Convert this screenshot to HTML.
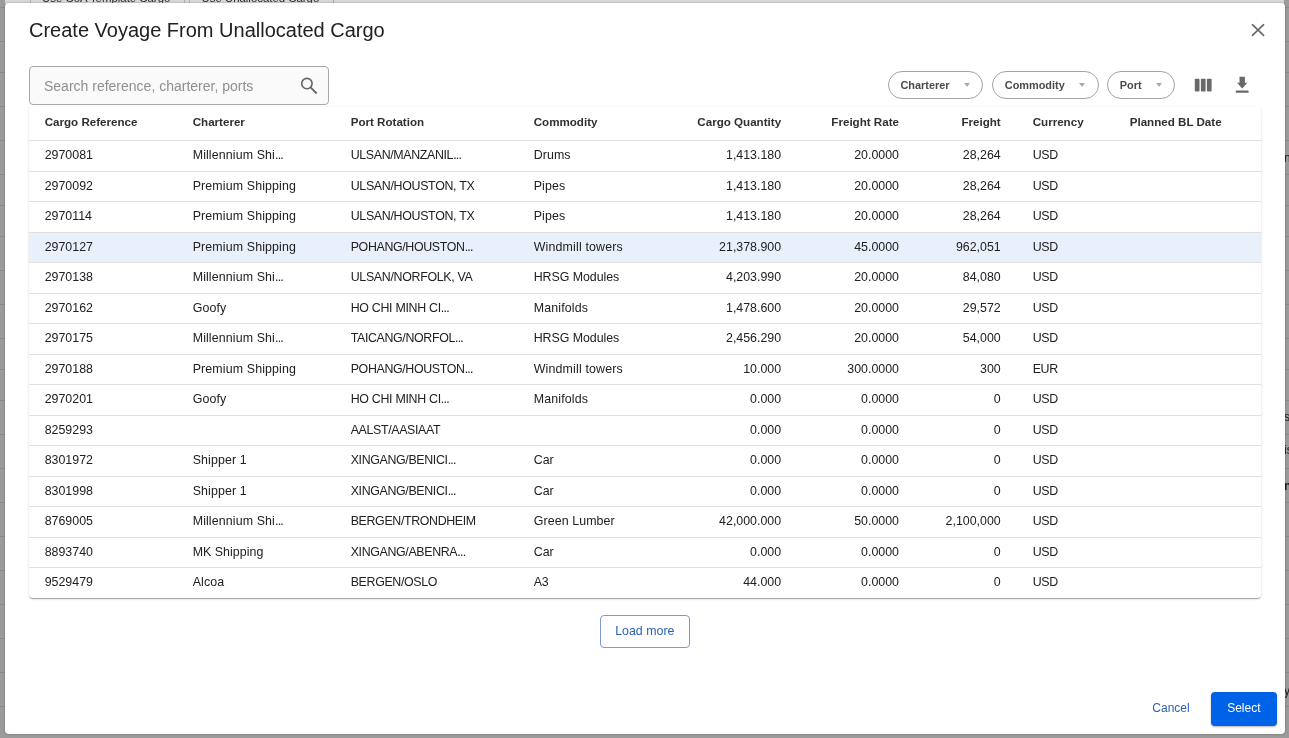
<!DOCTYPE html>
<html><head><meta charset="utf-8">
<style>
*{box-sizing:border-box;margin:0;padding:0}
html,body{width:1289px;height:738px;overflow:hidden;background:#9b9b9b;font-family:"Liberation Sans",sans-serif;color:#212121;-webkit-font-smoothing:antialiased}
.abs{position:absolute}
.t{position:absolute;white-space:nowrap;line-height:1}
.bgline{position:absolute;left:0;width:1289px;height:1px;background:#8b8b8b}
#topbar{will-change:transform;position:absolute;left:5px;top:0;width:1279px;height:4px;background:#d9d9d9;overflow:hidden}
#topbar .sep{position:absolute;top:0;width:1px;height:4px;background:#b0b0b0}
#modal{will-change:transform;position:absolute;left:5px;top:3px;width:1280px;height:731px;background:#fff;border-radius:4px;box-shadow:0 0 2.5px rgba(0,0,0,.3)}
#title{left:24px;top:17px;font-size:20px;color:#212121}
#search{left:24px;top:63px;width:300px;height:39px;border:1px solid #a8a8a8;border-radius:4px;background:#fafafa}
.chip{position:absolute;top:68px;height:27.5px;border:1px solid #a3a3a3;border-radius:14px}
.chipt{font-size:10.9px;font-weight:bold;color:#4a4a4a}
.arr{position:absolute;width:0;height:0;border-left:3.2px solid transparent;border-right:3.2px solid transparent;border-top:4px solid #ababab}
#table{left:24px;top:103.7px;width:1232px;height:491.8px;background:#fff;border-radius:4px;box-shadow:0 2px 1px -1px rgba(0,0,0,.2),0 1px 1px 0 rgba(0,0,0,.14),0 1px 3px 0 rgba(0,0,0,.12)}
.row{position:absolute;left:0;width:1232px;height:30.5px;border-top:1px solid #e0e0e0;font-size:12.4px;color:#212121}
.row.sel{background:#e8f0fc}
.hdr{position:absolute;left:0;top:0;width:1232px;height:33.5px;font-size:11.6px;font-weight:bold;color:#303030}
.c{position:absolute;white-space:nowrap;top:7.1px}
.hdr .c{top:8.6px}
.r{text-align:right}
.up{letter-spacing:-0.38px}
.el{letter-spacing:-0.75px;margin-left:0px}
#load{left:595.3px;top:612.3px;width:89.3px;height:32.3px;border:1px solid #7d9bd1;border-radius:4px}
#select{left:1206.1px;top:689.3px;width:65.6px;height:33.4px;background:#0062e6;border-radius:4px;box-shadow:0 1px 2px rgba(0,0,0,.3)}
.rs{will-change:transform;position:absolute;font-size:12px;color:#1a1a1a;white-space:nowrap;line-height:1}
</style></head><body>
<div class="bgline" style="top:7px"></div>
<div class="bgline" style="top:41px"></div>
<div class="bgline" style="top:72px"></div>
<div class="bgline" style="top:106px"></div>
<div class="bgline" style="top:140px"></div>
<div class="bgline" style="top:174px"></div>
<div class="bgline" style="top:205px"></div>
<div class="bgline" style="top:236px"></div>
<div class="bgline" style="top:270px"></div>
<div class="bgline" style="top:304px"></div>
<div class="bgline" style="top:338px"></div>
<div class="bgline" style="top:369px"></div>
<div class="bgline" style="top:400px"></div>
<div class="bgline" style="top:434px"></div>
<div class="bgline" style="top:468px"></div>
<div class="bgline" style="top:502px"></div>
<div class="bgline" style="top:536px"></div>
<div class="bgline" style="top:570px"></div>
<div class="bgline" style="top:604px"></div>
<div class="bgline" style="top:638px"></div>
<div class="bgline" style="top:672px"></div>
<div class="bgline" style="top:706px"></div>
<div id="topbar">
  <div class="sep" style="left:24.5px"></div>
  <div class="sep" style="left:178.5px"></div>
  <div class="sep" style="left:183.5px"></div>
  <div class="sep" style="left:327.5px"></div>
  <div class="t" style="left:37px;top:-6.8px;font-size:11.4px;color:#2a2a2a">Use CoA Template Cargo</div>
  <div class="t" style="left:196.5px;top:-6.8px;font-size:11.4px;color:#2a2a2a">Use Unallocated Cargo</div>
</div>
<div class="rs" style="left:1284.2px;top:151.5px">n</div>
<div class="rs" style="left:1284.3px;top:411px">s</div>
<div class="rs" style="left:1284.3px;top:443.5px">is</div>
<div class="rs" style="left:1284.2px;top:479.5px;font-weight:bold">n</div>
<div class="rs" style="left:1284px;top:684.5px">y</div>

<div id="modal">
  <div id="title" class="t">Create Voyage From Unallocated Cargo</div>
  <svg class="abs" style="left:1235px;top:12px" width="36" height="36" viewBox="1240 15 36 36"><path d="M1252.4 24.7L1263.6 35.4M1263.6 24.7L1252.4 35.4" stroke="#666" stroke-width="1.6" stroke-linecap="round" fill="none"/></svg>

  <div id="search" class="abs"></div>
  <div class="t" style="left:39px;top:76px;font-size:14px;color:#8f8f8f">Search reference, charterer, ports</div>
  <svg class="abs" style="left:285px;top:67px" width="40" height="30" viewBox="290 70 40 30"><circle cx="306.9" cy="83.6" r="5.2" stroke="#666" stroke-width="1.6" fill="none"/><path d="M310.8 87.6L316 92.8" stroke="#666" stroke-width="1.9" stroke-linecap="square" fill="none"/></svg>

  <div class="chip" style="left:883.2px;width:95.3px"></div>
  <div class="t chipt" style="left:895.5px;top:76.5px">Charterer</div>
  <div class="arr" style="left:958.8px;top:80.2px"></div>
  <div class="chip" style="left:987px;width:106.8px"></div>
  <div class="t chipt" style="left:999.8px;top:76.5px">Commodity</div>
  <div class="arr" style="left:1073.9px;top:80.2px"></div>
  <div class="chip" style="left:1102.1px;width:68.4px"></div>
  <div class="t chipt" style="left:1114.8px;top:76.5px">Port</div>
  <div class="arr" style="left:1150.9px;top:80.2px"></div>

  <svg class="abs" style="left:1180px;top:67px" width="75" height="30" viewBox="1185 70 75 30">
    <rect x="1194.8" y="78.7" width="4.7" height="12.8" rx="0.9" fill="#696969"/>
    <rect x="1200.9" y="78.7" width="4.7" height="12.8" rx="0.9" fill="#696969"/>
    <rect x="1206.9" y="78.7" width="4.7" height="12.8" rx="0.9" fill="#696969"/>
    <path d="M1239.5 76.8H1244.9V82.8H1247.4L1242.2 88.6L1237 82.8H1239.5Z" fill="#696969"/>
    <rect x="1235.8" y="90.6" width="12.8" height="2.1" rx="0.5" fill="#696969"/>
  </svg>

  <div id="table" class="abs">
    <div class="hdr">
      <span class="c" style="left:15.7px">Cargo Reference</span>
      <span class="c" style="left:163.7px">Charterer</span>
      <span class="c" style="left:321.7px">Port Rotation</span>
      <span class="c" style="left:504.7px">Commodity</span>
      <span class="c r" style="right:479.9px">Cargo Quantity</span>
      <span class="c r" style="right:362px">Freight Rate</span>
      <span class="c r" style="right:260.3px">Freight</span>
      <span class="c" style="left:1003.7px">Currency</span>
      <span class="c" style="left:1100.7px">Planned BL Date</span>
    </div>
    <div class="row" style="top:33.5px"><span class="c" style="left:15.7px">2970081</span><span class="c" style="left:163.7px;letter-spacing:0.119px">Millennium Shi<span class="el">...</span></span><span class="c" style="left:321.7px;letter-spacing:-0.353px">ULSAN/MANZANIL<span class="el">...</span></span><span class="c" style="left:504.7px;letter-spacing:0.1px">Drums</span><span class="c r" style="right:479.9px">1,413.180</span><span class="c r" style="right:362px">20.0000</span><span class="c r" style="right:260.3px">28,264</span><span class="c" style="left:1003.7px;letter-spacing:-0.37px">USD</span></div>
    <div class="row" style="top:64.0px"><span class="c" style="left:15.7px">2970092</span><span class="c" style="left:163.7px;letter-spacing:0.131px">Premium Shipping</span><span class="c" style="left:321.7px;letter-spacing:-0.313px">ULSAN/HOUSTON, TX</span><span class="c" style="left:504.7px;letter-spacing:0.1px">Pipes</span><span class="c r" style="right:479.9px">1,413.180</span><span class="c r" style="right:362px">20.0000</span><span class="c r" style="right:260.3px">28,264</span><span class="c" style="left:1003.7px;letter-spacing:-0.37px">USD</span></div>
    <div class="row" style="top:94.5px"><span class="c" style="left:15.7px">2970114</span><span class="c" style="left:163.7px;letter-spacing:0.131px">Premium Shipping</span><span class="c" style="left:321.7px;letter-spacing:-0.313px">ULSAN/HOUSTON, TX</span><span class="c" style="left:504.7px;letter-spacing:0.1px">Pipes</span><span class="c r" style="right:479.9px">1,413.180</span><span class="c r" style="right:362px">20.0000</span><span class="c r" style="right:260.3px">28,264</span><span class="c" style="left:1003.7px;letter-spacing:-0.37px">USD</span></div>
    <div class="row sel" style="top:125.0px"><span class="c" style="left:15.7px">2970127</span><span class="c" style="left:163.7px;letter-spacing:0.131px">Premium Shipping</span><span class="c" style="left:321.7px;letter-spacing:-0.353px">POHANG/HOUSTON<span class="el">...</span></span><span class="c" style="left:504.7px;letter-spacing:0.165px">Windmill towers</span><span class="c r" style="right:479.9px">21,378.900</span><span class="c r" style="right:362px">45.0000</span><span class="c r" style="right:260.3px">962,051</span><span class="c" style="left:1003.7px;letter-spacing:-0.37px">USD</span></div>
    <div class="row" style="top:155.5px"><span class="c" style="left:15.7px">2970138</span><span class="c" style="left:163.7px;letter-spacing:0.119px">Millennium Shi<span class="el">...</span></span><span class="c" style="left:321.7px;letter-spacing:-0.313px">ULSAN/NORFOLK, VA</span><span class="c" style="left:504.7px;letter-spacing:-0.048px">HRSG Modules</span><span class="c r" style="right:479.9px">4,203.990</span><span class="c r" style="right:362px">20.0000</span><span class="c r" style="right:260.3px">84,080</span><span class="c" style="left:1003.7px;letter-spacing:-0.37px">USD</span></div>
    <div class="row" style="top:186.0px"><span class="c" style="left:15.7px">2970162</span><span class="c" style="left:163.7px;letter-spacing:0.1px">Goofy</span><span class="c" style="left:321.7px;letter-spacing:-0.299px">HO CHI MINH CI<span class="el">...</span></span><span class="c" style="left:504.7px;letter-spacing:0.153px">Manifolds</span><span class="c r" style="right:479.9px">1,478.600</span><span class="c r" style="right:362px">20.0000</span><span class="c r" style="right:260.3px">29,572</span><span class="c" style="left:1003.7px;letter-spacing:-0.37px">USD</span></div>
    <div class="row" style="top:216.5px"><span class="c" style="left:15.7px">2970175</span><span class="c" style="left:163.7px;letter-spacing:0.119px">Millennium Shi<span class="el">...</span></span><span class="c" style="left:321.7px;letter-spacing:-0.353px">TAICANG/NORFOL<span class="el">...</span></span><span class="c" style="left:504.7px;letter-spacing:-0.048px">HRSG Modules</span><span class="c r" style="right:479.9px">2,456.290</span><span class="c r" style="right:362px">20.0000</span><span class="c r" style="right:260.3px">54,000</span><span class="c" style="left:1003.7px;letter-spacing:-0.37px">USD</span></div>
    <div class="row" style="top:247.0px"><span class="c" style="left:15.7px">2970188</span><span class="c" style="left:163.7px;letter-spacing:0.131px">Premium Shipping</span><span class="c" style="left:321.7px;letter-spacing:-0.353px">POHANG/HOUSTON<span class="el">...</span></span><span class="c" style="left:504.7px;letter-spacing:0.165px">Windmill towers</span><span class="c r" style="right:479.9px">10.000</span><span class="c r" style="right:362px">300.0000</span><span class="c r" style="right:260.3px">300</span><span class="c" style="left:1003.7px;letter-spacing:-0.37px">EUR</span></div>
    <div class="row" style="top:277.5px"><span class="c" style="left:15.7px">2970201</span><span class="c" style="left:163.7px;letter-spacing:0.1px">Goofy</span><span class="c" style="left:321.7px;letter-spacing:-0.299px">HO CHI MINH CI<span class="el">...</span></span><span class="c" style="left:504.7px;letter-spacing:0.153px">Manifolds</span><span class="c r" style="right:479.9px">0.000</span><span class="c r" style="right:362px">0.0000</span><span class="c r" style="right:260.3px">0</span><span class="c" style="left:1003.7px;letter-spacing:-0.37px">USD</span></div>
    <div class="row" style="top:308.0px"><span class="c" style="left:15.7px">8259293</span><span class="c" style="left:163.7px;letter-spacing:0px"></span><span class="c" style="left:321.7px;letter-spacing:-0.351px">AALST/AASIAAT</span><span class="c" style="left:504.7px;letter-spacing:0px"></span><span class="c r" style="right:479.9px">0.000</span><span class="c r" style="right:362px">0.0000</span><span class="c r" style="right:260.3px">0</span><span class="c" style="left:1003.7px;letter-spacing:-0.37px">USD</span></div>
    <div class="row" style="top:338.5px"><span class="c" style="left:15.7px">8301972</span><span class="c" style="left:163.7px;letter-spacing:0.104px">Shipper 1</span><span class="c" style="left:321.7px;letter-spacing:-0.353px">XINGANG/BENICI<span class="el">...</span></span><span class="c" style="left:504.7px;letter-spacing:0.02px">Car</span><span class="c r" style="right:479.9px">0.000</span><span class="c r" style="right:362px">0.0000</span><span class="c r" style="right:260.3px">0</span><span class="c" style="left:1003.7px;letter-spacing:-0.37px">USD</span></div>
    <div class="row" style="top:369.0px"><span class="c" style="left:15.7px">8301998</span><span class="c" style="left:163.7px;letter-spacing:0.104px">Shipper 1</span><span class="c" style="left:321.7px;letter-spacing:-0.353px">XINGANG/BENICI<span class="el">...</span></span><span class="c" style="left:504.7px;letter-spacing:0.02px">Car</span><span class="c r" style="right:479.9px">0.000</span><span class="c r" style="right:362px">0.0000</span><span class="c r" style="right:260.3px">0</span><span class="c" style="left:1003.7px;letter-spacing:-0.37px">USD</span></div>
    <div class="row" style="top:399.5px"><span class="c" style="left:15.7px">8769005</span><span class="c" style="left:163.7px;letter-spacing:0.119px">Millennium Shi<span class="el">...</span></span><span class="c" style="left:321.7px;letter-spacing:-0.356px">BERGEN/TRONDHEIM</span><span class="c" style="left:504.7px;letter-spacing:0.102px">Green Lumber</span><span class="c r" style="right:479.9px">42,000.000</span><span class="c r" style="right:362px">50.0000</span><span class="c r" style="right:260.3px">2,100,000</span><span class="c" style="left:1003.7px;letter-spacing:-0.37px">USD</span></div>
    <div class="row" style="top:430.0px"><span class="c" style="left:15.7px">8893740</span><span class="c" style="left:163.7px;letter-spacing:0.036px">MK Shipping</span><span class="c" style="left:321.7px;letter-spacing:-0.353px">XINGANG/ABENRA<span class="el">...</span></span><span class="c" style="left:504.7px;letter-spacing:0.02px">Car</span><span class="c r" style="right:479.9px">0.000</span><span class="c r" style="right:362px">0.0000</span><span class="c r" style="right:260.3px">0</span><span class="c" style="left:1003.7px;letter-spacing:-0.37px">USD</span></div>
    <div class="row" style="top:460.5px"><span class="c" style="left:15.7px">9529479</span><span class="c" style="left:163.7px;letter-spacing:0.1px">Alcoa</span><span class="c" style="left:321.7px;letter-spacing:-0.345px">BERGEN/OSLO</span><span class="c" style="left:504.7px;letter-spacing:-0.19px">A3</span><span class="c r" style="right:479.9px">44.000</span><span class="c r" style="right:362px">0.0000</span><span class="c r" style="right:260.3px">0</span><span class="c" style="left:1003.7px;letter-spacing:-0.37px">USD</span></div>
  </div>

  <div id="load" class="abs"></div>
  <div class="t" style="left:610.2px;top:622px;font-size:12.4px;color:#2c62b4">Load more</div>
  <div class="t" style="left:1147.3px;top:699.1px;font-size:12px;color:#2c62b4">Cancel</div>
  <div id="select" class="abs"></div>
  <div class="t" style="left:1222.2px;top:699.3px;font-size:12px;color:#fff">Select</div>
</div>
</body></html>
